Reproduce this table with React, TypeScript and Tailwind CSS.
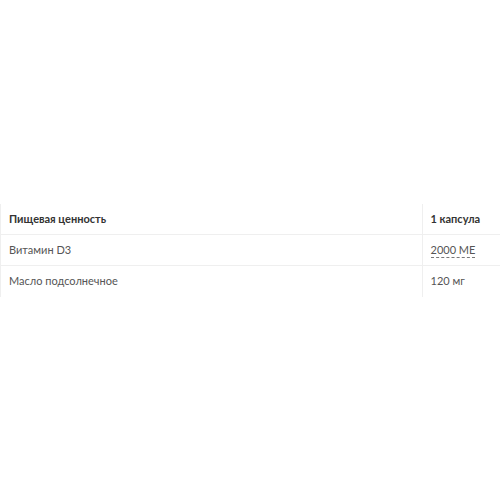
export default function App() {
  const rows = [
    { name: 'Витамин D3', value: '2000 МЕ', hint: true },
    { name: 'Масло подсолнечное', value: '120 мг', hint: false },
  ];

  return (
    <div className="h-[500px] w-[500px] bg-white flex items-center font-['Lato',sans-serif] text-[11px]">
      <table className="w-full border-collapse border-l border-[#efefef]">
        <thead>
          <tr className="border-b border-[#efefef]">
            <th className="h-[31px] px-2 text-left font-bold text-[#333]">Пищевая ценность</th>
            <th className="w-[78px] h-[31px] px-2 text-left font-bold text-[#333] border-l border-[#efefef]">1 капсула</th>
          </tr>
        </thead>
        <tbody>
          {rows.map((row, i) => (
            <tr key={row.name} className={i < rows.length - 1 ? 'border-b border-[#efefef]' : ''}>
              <td className="h-[31px] px-2 text-[#555]">{row.name}</td>
              <td className="h-[31px] px-2 text-[#555] border-l border-[#efefef]">
                {row.hint ? (
                  <span className="border-b border-dashed border-[#777] pb-[1px]">{row.value}</span>
                ) : (
                  row.value
                )}
              </td>
            </tr>
          ))}
        </tbody>
      </table>
    </div>
  );
}
